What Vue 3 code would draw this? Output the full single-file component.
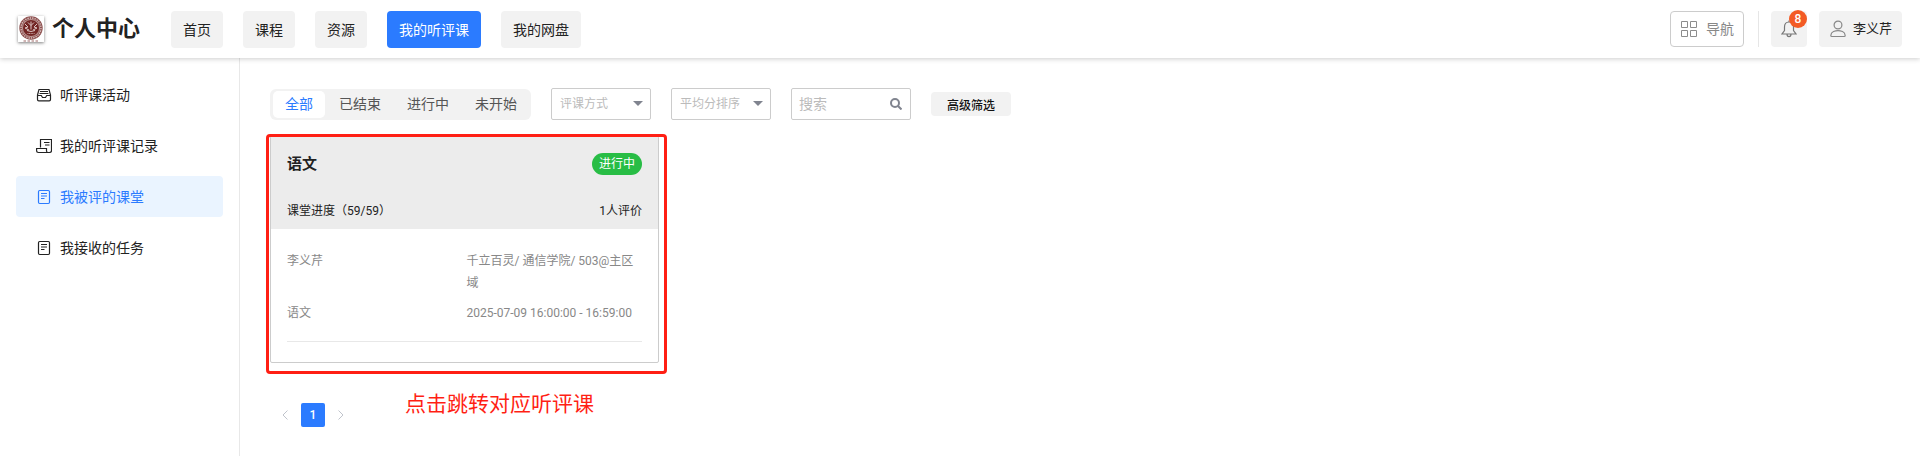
<script setup>
import { ref } from 'vue'

const navItems = ['首页', '课程', '资源', '我的听评课', '我的网盘']
const activeNav = ref('我的听评课')

const menu = [
  { label: '听评课活动', icon: 'inbox' },
  { label: '我的听评课记录', icon: 'scroll' },
  { label: '我被评的课堂', icon: 'doc' },
  { label: '我接收的任务', icon: 'doc' },
]
const activeMenu = ref('我被评的课堂')

const tabs = ['全部', '已结束', '进行中', '未开始']
const activeTab = ref('全部')
const keyword = ref('')
</script>

<template>
  <div class="page">
    <header class="header">
      <svg class="logo" viewBox="0 0 26 26" aria-hidden="true">
        <rect width="26" height="26" fill="#fff" />
        <circle cx="13" cy="12" r="11.7" fill="#8d5150" />
        <circle cx="13" cy="12" r="10" fill="none" stroke="#d9c0bf" stroke-width="1.4" stroke-dasharray="1.3 1.1" />
        <circle cx="13" cy="12" r="8.5" fill="#732524" stroke="#e6d6d5" stroke-width="0.6" />
        <path d="M7 8l3 3-3 1 4 2M19 8l-3 3 3 1-4 2M13 5.500v8M10 6.500l3 3 3-3M9 14.500q4 2 8 0" fill="none" stroke="#dcc5c4" stroke-width="1" />
        <path d="M9.500 17.500h7" stroke="#c9a5a4" stroke-width="1" stroke-dasharray="1 0.600" />
        <path d="M5.500 25h15" stroke="#a06a69" stroke-width="1.200" stroke-dasharray="2.500 1.500" />
      </svg>
      <h1 class="site-title">个人中心</h1>
      <nav class="nav">
        <button
          v-for="item in navItems"
          :key="item"
          type="button"
          class="nav-btn"
          :class="{ active: item === activeNav }"
          @click="activeNav = item"
        >{{ item }}</button>
      </nav>
      <div class="tools">
        <button type="button" class="guide">
          <svg width="16" height="16" viewBox="0 0 16 16" fill="none" stroke="#8c8c8c" aria-hidden="true">
            <path d="M.5.5h6v6h-6zM9.500.5h6v6h-6zM.5 9.500h6v6h-6zM9.500 9.500h6v6h-6z" />
          </svg>
          导航
        </button>
        <span class="divider"></span>
        <button type="button" class="bell" aria-label="消息">
          <svg width="16" height="18" viewBox="0 0 16 18" fill="none" stroke="#777" stroke-width="1.200" aria-hidden="true">
            <path d="M8 2C5 2 3.500 4 3.500 7v3.500L1 14h14l-2.500-3.500V7C12.500 4 11 2 8 2zM6 14c0 3.500 4 3.500 4 0M8 .5V2" />
          </svg>
          <span class="badge">8</span>
        </button>
        <button type="button" class="user">
          <svg width="16" height="18" viewBox="0 0 16 18" fill="none" stroke="#888" stroke-width="1.200" aria-hidden="true">
            <circle cx="8" cy="5" r="3.900" />
            <path d="M3.500 11.500Q1 12.500.8 15.500q0 1 1 1h12.400q1 0 1-1Q15 12.500 12.500 11.500q-4.500-1.600-9 0z" />
          </svg>
          李义芹
        </button>
      </div>
    </header>

    <div class="body">
      <aside class="sidebar">
        <button
          v-for="item in menu"
          :key="item.label"
          type="button"
          class="menu-item"
          :class="{ active: item.label === activeMenu }"
          @click="activeMenu = item.label"
        >
          <svg width="16" height="16" viewBox="0 0 16 16" fill="none" stroke="currentColor" stroke-width="1.200" aria-hidden="true">
            <template v-if="item.icon === 'inbox'">
              <path d="M1.500 8 3 2.500h10L14.500 8v4.500q0 1.300-1.300 1.300H2.800q-1.300 0-1.300-1.300zM1.500 8.500h3.800L6.500 10.500h3l1.200-2h3.800M3.500 6.500h9M4 4.500h8" />
            </template>
            <template v-else-if="item.icon === 'scroll'">
              <path d="M4.500 9.500V1.500H15.500v11q0 2-2 2H2.500Q.6 14.500.6 12.600V10.500H10.500v2.500q.2 1.500 1.500 1.500M8 4.500h5.500M9 7h4.500" />
            </template>
            <template v-else>
              <rect x="2.500" y="1.500" width="11" height="13" rx="1.200" />
              <path d="M5 4.500h6M5 7h6M5 9.500h3.500" />
            </template>
          </svg>
          {{ item.label }}
        </button>
      </aside>

      <main class="main">
        <div class="filters">
          <div class="tabs">
            <button
              v-for="tab in tabs"
              :key="tab"
              type="button"
              class="tab"
              :class="{ active: tab === activeTab }"
              @click="activeTab = tab"
            >{{ tab }}</button>
          </div>
          <div class="select-box">
            <select class="field" aria-label="评课方式"><option>评课方式</option></select>
            <svg class="caret" width="10" height="5" viewBox="0 0 10 5" aria-hidden="true"><path d="M0 0h10L5 5z" fill="#80848f" /></svg>
          </div>
          <div class="select-box">
            <select class="field" aria-label="平均分排序"><option>平均分排序</option></select>
            <svg class="caret" width="10" height="5" viewBox="0 0 10 5" aria-hidden="true"><path d="M0 0h10L5 5z" fill="#80848f" /></svg>
          </div>
          <div class="search-box">
            <input v-model="keyword" class="field" type="text" placeholder="搜索" aria-label="搜索" />
            <button type="button" class="search-btn" aria-label="搜索">
              <svg width="12" height="12" viewBox="0 0 12 12" fill="none" stroke="#80848f" stroke-width="2" aria-hidden="true">
                <circle cx="5" cy="5" r="4" /><path d="M8 8l3.500 3.500" />
              </svg>
            </button>
          </div>
          <button type="button" class="advanced">高级筛选</button>
        </div>

        <div class="cards">
          <div class="card-wrap">
            <article class="card">
              <div class="card-head">
                <div class="row">
                  <h2 class="card-title">语文</h2>
                  <span class="status">进行中</span>
                </div>
                <div class="row progress">
                  <span>课堂进度（59/59）</span>
                  <span>1人评价</span>
                </div>
              </div>
              <div class="card-body">
                <div class="info">
                  <span>李义芹</span>
                  <span>千立百灵/ 通信学院/ 503@主区域</span>
                  <span>语文</span>
                  <span>2025-07-09 16:00:00 - 16:59:00</span>
                </div>
              </div>
            </article>
            <div class="frame"></div>
            <p class="note">点击跳转对应听评课</p>
          </div>
        </div>

        <nav class="pager" aria-label="分页">
          <button type="button" class="page-btn" aria-label="上一页">
            <svg width="6" height="10" viewBox="0 0 6 10" fill="none" stroke="#c0c4cc" aria-hidden="true"><path d="M5.500.5 1 5l4.500 4.500" /></svg>
          </button>
          <button type="button" class="page-btn current">1</button>
          <button type="button" class="page-btn" aria-label="下一页">
            <svg width="6" height="10" viewBox="0 0 6 10" fill="none" stroke="#c0c4cc" aria-hidden="true"><path d="M.5.5 5 5 .5 9.500" /></svg>
          </button>
        </nav>
      </main>
    </div>
  </div>
</template>

<style>
body {
  margin: 0;
  background: #fff;
}
</style>

<style scoped>
.page {
  display: flex;
  flex-direction: column;
  min-height: 100vh;
  color: #222;
  font-family: Roboto, "Noto Sans CJK SC", sans-serif;
  font-size: 14px;
}
.page *,
.page {
  box-sizing: border-box;
}
button,
select,
input {
  margin: 0;
  padding: 0;
  border: 0;
  color: inherit;
  font: inherit;
}
button {
  cursor: pointer;
  white-space: nowrap;
}
h1,
h2,
p {
  margin: 0;
}
svg {
  flex: none;
}
.header {
  position: relative;
  display: flex;
  align-items: center;
  height: 58px;
  padding: 0 18px;
  background: #fff;
  box-shadow: 0 1px 5px rgba(0, 0, 0, 0.2);
}
.logo {
  width: 26px;
  height: 26px;
  box-shadow: 0 1px 3px rgba(0, 0, 0, 0.5);
}
.site-title {
  margin-left: 8px;
  font-size: 22px;
  font-weight: 700;
  line-height: 30px;
}
.nav {
  display: flex;
  gap: 20px;
  margin-left: 31px;
}
.nav-btn {
  height: 37px;
  padding: 0 12px;
  border-radius: 4px;
  background: #f2f2f2;
}
.nav-btn.active {
  background: #2b7bff;
  color: #fff;
}
.tools {
  display: flex;
  align-items: center;
  margin-left: auto;
}
.tools button {
  display: flex;
  align-items: center;
  height: 36px;
  border-radius: 4px;
  background: #f2f2f2;
  line-height: 20px;
}
.tools .guide {
  gap: 9px;
  padding: 0 9px 0 10px;
  border: 1px solid #ccc;
  background: #fff;
  color: #888;
}
.divider {
  width: 1px;
  height: 36px;
  margin: 0 12px 0 14px;
  background: #e6e6e6;
}
.tools .bell {
  position: relative;
  justify-content: center;
  width: 36px;
  margin-right: 12px;
}
.badge {
  position: absolute;
  top: -1px;
  right: 0;
  width: 18px;
  height: 18px;
  border-radius: 9px;
  background: #f35b25;
  color: #fff;
  font-size: 12px;
  font-weight: 500;
  line-height: 18px;
}
.tools .user {
  gap: 7px;
  padding: 0 10px 0 11px;
  font-size: 13px;
}
.body {
  display: flex;
  flex: 1;
}
.sidebar {
  display: flex;
  flex: none;
  flex-direction: column;
  gap: 10px;
  width: 240px;
  padding: 16px;
  border-right: 1px solid #e8e8e8;
}
.menu-item {
  display: flex;
  align-items: center;
  gap: 8px;
  height: 41px;
  padding: 0 20px;
  border-radius: 4px;
  background: transparent;
  line-height: 20px;
}
.menu-item.active {
  background: #eaf4ff;
  color: #2b7bff;
}
.main {
  flex: 1;
  min-width: 0;
  padding: 30px 22px 28px 30px;
}
.filters {
  display: flex;
  align-items: center;
  gap: 20px;
}
.tabs {
  display: flex;
  gap: 2px;
  padding: 2px 2px 2px 3px;
  border-radius: 6px;
  background: #f2f2f2;
}
.tab {
  height: 27px;
  padding: 0 12px;
  border-radius: 5px;
  background: transparent;
  color: #555;
  line-height: 20px;
}
.tab.active {
  background: #fff;
  color: #2b7bff;
}
.select-box,
.search-box {
  position: relative;
  width: 100px;
}
.search-box {
  width: 120px;
}
.field {
  display: block;
  width: 100%;
  height: 32px;
  padding: 0 8px;
  border: 1px solid #ccc;
  border-radius: 2px;
  background: #fff;
  color: #bbb;
  font-size: 12px;
  appearance: none;
}
input.field {
  padding: 0 32px 0 7px;
  color: #222;
  font-size: 14px;
}
.field::placeholder {
  color: #bbb;
}
.caret {
  position: absolute;
  top: 13px;
  right: 8px;
  pointer-events: none;
}
.search-btn {
  position: absolute;
  top: 0;
  right: 9px;
  display: flex;
  align-items: center;
  height: 32px;
  background: transparent;
}
.advanced {
  width: 80px;
  height: 24px;
  border-radius: 4px;
  background: #f2f2f2;
  color: #111;
  font-size: 12px;
  font-weight: 500;
}
.cards {
  display: grid;
  grid-template-columns: repeat(4, 1fr);
  gap: 24px;
  margin-top: 16px;
}
.card-wrap {
  position: relative;
}
.card {
  border: 1px solid #ccc;
  border-radius: 2px;
}
.card-head {
  padding: 16px 16px 8px;
  background: #ececec;
}
.row {
  display: flex;
  align-items: center;
  justify-content: space-between;
}
.card-title {
  font-size: 15px;
  font-weight: 700;
  line-height: 22px;
}
.status {
  padding: 0 7px;
  border-radius: 11px;
  background: #28bd45;
  color: #fff;
  font-size: 12px;
  line-height: 22px;
}
.progress {
  margin-top: 26px;
  font-size: 12px;
  line-height: 20px;
}
.card-body {
  padding: 21px 16px 20px;
}
.info {
  display: grid;
  grid-template-columns: 1fr 1fr;
  gap: 8px 4px;
  padding-bottom: 17px;
  border-bottom: 1px solid #e8e8e8;
  color: #888;
  font-size: 12px;
  line-height: 22px;
}
.frame {
  position: absolute;
  inset: -2px -8px -11px -4px;
  border: 3px solid #ff1f14;
  border-radius: 4px;
  pointer-events: none;
}
.note {
  position: absolute;
  top: 100%;
  left: 135px;
  margin-top: 26px;
  color: #ff1f14;
  font-size: 21px;
  line-height: 30px;
  white-space: nowrap;
}
.pager {
  display: flex;
  gap: 4px;
  margin: 40px 0 0 3px;
}
.page-btn {
  display: flex;
  align-items: center;
  justify-content: center;
  width: 24px;
  height: 24px;
  border-radius: 2px;
  background: transparent;
  font-size: 12px;
}
.page-btn.current {
  background: #2b7bff;
  color: #fff;
  font-weight: 500;
}
</style>
